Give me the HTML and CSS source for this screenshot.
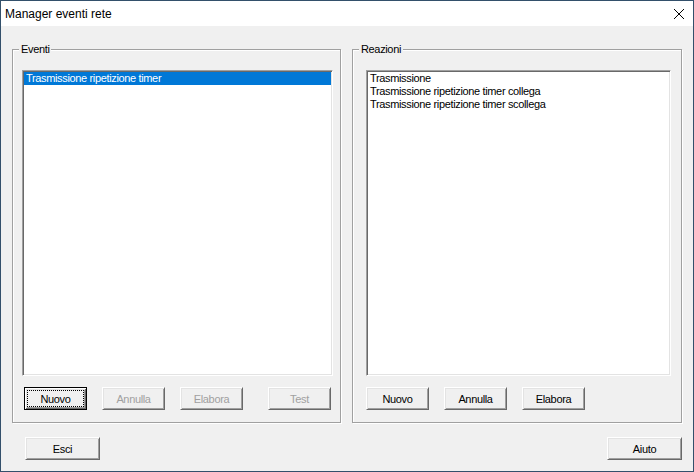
FILE: index.html
```html
<!DOCTYPE html>
<html lang="it">
<head>
    <meta charset="UTF-8">
    <title>Manager eventi rete</title>
    <link rel="stylesheet" href="styles.css">
</head>
<body>
    <div class="window">
        <div class="titlebar">
            <span class="title">Manager eventi rete</span>
            <span class="close">
                <svg width="10" height="10" viewBox="0 0 10 10">
                    <line x1="0" y1="0" x2="10" y2="10" />
                    <line x1="10" y1="0" x2="0" y2="10" />
                </svg>
            </span>
        </div>
        <div class="client">
            <div class="groups">
                <fieldset class="group group-events">
                    <legend>Eventi</legend>
                    <div class="listbox">
                        <div class="item selected">Trasmissione ripetizione timer</div>
                    </div>
                    <div class="btnrow">
                        <button class="btn default">Nuovo</button>
                        <button class="btn" disabled>Annulla</button>
                        <button class="btn" disabled>Elabora</button>
                        <button class="btn push-right" disabled>Test</button>
                    </div>
                </fieldset>
                <fieldset class="group group-reactions">
                    <legend>Reazioni</legend>
                    <div class="listbox">
                        <div class="item">Trasmissione</div>
                        <div class="item">Trasmissione ripetizione timer collega</div>
                        <div class="item">Trasmissione ripetizione timer scollega</div>
                    </div>
                    <div class="btnrow">
                        <button class="btn">Nuovo</button>
                        <button class="btn">Annulla</button>
                        <button class="btn">Elabora</button>
                    </div>
                </fieldset>
            </div>
            <div class="footer">
                <button class="btn wide">Esci</button>
                <button class="btn wide">Aiuto</button>
            </div>
        </div>
    </div>
</body>
</html>
```

FILE: styles.css
```css
body {
    margin: 0;
    font-family: "Liberation Sans", Arial, sans-serif;
}

.window {
    width: 694px;
    height: 472px;
    box-sizing: border-box;
    border: 1px solid #33506b;
    background: #f0f0f0;
}

/* title bar */
.titlebar {
    height: 25px;
    background: #fff;
    display: flex;
    align-items: center;
    justify-content: space-between;
}
.titlebar .title {
    font-size: 12px;
    color: #000;
    padding-left: 4px;
}
.titlebar .close {
    display: flex;
    margin-right: 9px;
}
.titlebar .close line {
    stroke: #000;
    stroke-width: 1;
}

/* dialog body */
.client {
    padding: 17px 11px 0 11px;
    font-size: 11px;
    letter-spacing: -0.35px;
}

.groups {
    display: flex;
    gap: 11px;
}

.group {
    margin: 0;
    padding: 0;
    min-width: 0;
    box-sizing: border-box;
    height: 380px;
    border: 1px solid #a0a0a0;
    box-shadow: 1px 1px 0 #fff, inset 1px 1px 0 #fff;
}
.group-events { width: 329px; }
.group-reactions { width: 330px; }

.group legend {
    padding: 0 2px;
    margin-left: 6px;
    line-height: 13px;
    background: #f0f0f0;
}

.listbox {
    box-sizing: border-box;
    height: 306px;
    margin-top: 14px;
    background: #fff;
    border: 1px solid;
    border-color: #a0a0a0 #fff #fff #a0a0a0;
    box-shadow: inset 1px 1px 0 #696969, inset -1px -1px 0 #e3e3e3;
    padding: 1px;
}
.group-events .listbox { margin-left: 9px; width: 311px; }
.group-reactions .listbox { margin-left: 13px; width: 305px; }

.item {
    height: 13px;
    line-height: 13px;
    padding-left: 2px;
    white-space: nowrap;
}
.item.selected {
    background: #0078d7;
    color: #fff;
}

.btnrow {
    display: flex;
    gap: 15px;
    margin-top: 11px;
}
.group-events .btnrow { margin-left: 11px; width: 307px; }
.group-reactions .btnrow { margin-left: 13px; }
.push-right { margin-left: auto; }

.btn {
    box-sizing: border-box;
    width: 63px;
    height: 23px;
    padding: 0;
    font-family: inherit;
    font-size: 11px;
    letter-spacing: -0.35px;
    color: #000;
    background: #f0f0f0;
    border: 1px solid;
    border-color: #fff #696969 #696969 #fff;
    box-shadow: inset 1px 1px 0 #e3e3e3, inset -1px -1px 0 #a0a0a0;
}
.btn:disabled {
    color: #a0a0a0;
}
.btn.default {
    border: 1px solid #000;
    box-shadow: inset 1px 1px 0 #fff, inset -1px -1px 0 #696969,
                inset 2px 2px 0 #e3e3e3, inset -2px -2px 0 #a0a0a0;
    outline: 1px dotted #000;
    outline-offset: -4px;
}
.btn.wide { width: 75px; }

.footer {
    display: flex;
    justify-content: space-between;
    margin-top: 14px;
    padding-left: 13px;
}
```
